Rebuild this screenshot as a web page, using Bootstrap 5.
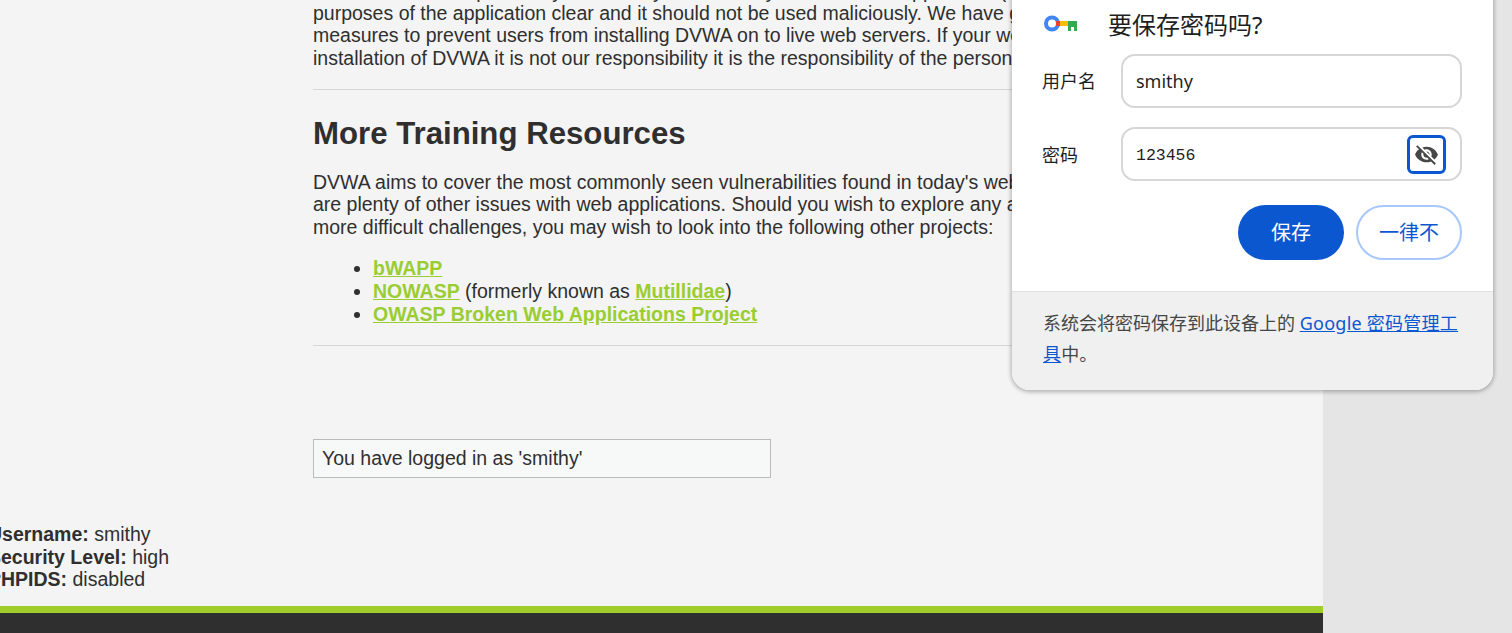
<!DOCTYPE html>
<html lang="en">
<head>
    <meta charset="UTF-8">
    <meta name="viewport" content="width=device-width, initial-scale=1.0">
    <title>DVWA</title>
    <link href="https://cdn.jsdelivr.net/npm/bootstrap@5.3.0/dist/css/bootstrap.min.css" rel="stylesheet">
    <style>
        html, body { height: 633px; overflow: hidden; }
        body { background: #e5e5e5; font-family: "Liberation Sans", Arial, sans-serif; font-size: 19.5px; line-height: 22.4px; color: #2f2f2f; }
        .dvwa-page { width: 1323px; height: 633px; background: #f4f4f4; overflow: hidden; }
        .dvwa-main { margin: -20.4px 0 0 313px; width: 1000px; white-space: nowrap; }
        .dvwa-main p { margin: 0; }
        .dvwa-main hr { margin: 20px 0 0; border: 0; border-top: 1px solid #d6d6d6; opacity: 1; }
        .dvwa-main h2 { font-size: 31.2px; line-height: 35px; font-weight: 700; margin: 26px 0 19.7px; color: #2f2f2f; }
        .dvwa-main ul { margin: 19.3px 0 0; padding-left: 60px; }
        .dvwa-main li { line-height: 22.6px; }
        .dvwa-main a { color: #9acd32; font-weight: 700; }
        .log-box { width: 458px; height: 39px; margin-top: 93px; padding: 7px 8px; border: 1px solid #bbb; background: #f7f9f8; }
        .status-block { margin: 45px 0 0 -12px; }
        .page-foot { border-top: 7px solid #a0cc2c; background: #2f2f2f; height: 60px; margin-top: 16px; }

        .pw-popup { position: absolute; top: -20px; left: 1012px; width: 481px; height: 410px; padding-top: 20px; background: #fff; border-radius: 0 0 18px 18px; box-shadow: 0 1px 4px 1px rgba(0,0,0,.28); font-family: "Noto Sans", "Noto Sans CJK SC", sans-serif; color: #1f1f1f; font-size: 18px; line-height: 24px; overflow: hidden; }
        .pw-head { height: 34px; margin: 8px 0 0 32px; }
        .pw-head svg { width: 34px; height: 17px; margin-top: -3px; }
        .pw-title { font-size: 24px; line-height: 34px; margin-left: 30px; }
        .pw-row { margin: 12px 31px 0 30px; }
        .pw-row-pw { margin-top: 19px; }
        .pw-row-pw .pw-label { padding-top: 2px; }
        .pw-label { width: 79px; flex-shrink: 0; }
        .pw-input { height: 54px; border: 2px solid #d6d6d6; border-radius: 14px; padding: 0 13px; font-size: 18px; color: #1f1f1f; box-shadow: none; }
        .pw-digits { font-family: "Liberation Mono", monospace; font-size: 16.5px; padding-top: 2px; padding-right: 52px; }
        .eye-btn { position: absolute; right: 16px; top: 8px; width: 39px; height: 39px; border: 3px solid #0b57d0; border-radius: 6px; background: #fff; }
        .eye-btn svg { width: 25px; height: 25px; }
        .pw-actions { margin: 24px 31px 0 0; gap: 12px; }
        .pw-save, .pw-never { width: 106px; height: 55px; font-size: 20px; padding: 0; }
        .pw-save { background: #0b57d0; border: 0; color: #fff; }
        .pw-never { background: #fff; border: 2px solid #a8c7fa; color: #0b57d0; }
        .pw-foot { margin-top: 31px; height: 100px; padding: 16px 30px 0 31px; background: #f0f0f0; border-top: 1px solid #e1e1e1; color: #444746; line-height: 31px; }
        .pw-foot a { color: #0b57d0; letter-spacing: .25px; }
    </style>
</head>
<body class="position-relative">
    <div class="dvwa-page">
        <div class="dvwa-main">
            <p>We do not take responsibility for the way in which any one uses this application (DVWA). We have made the<br>
            purposes of the application clear and it should not be used maliciously. We have given warnings and taken<br>
            measures to prevent users from installing DVWA on to live web servers. If your web server is compromised via an<br>
            installation of DVWA it is not our responsibility it is the responsibility of the person/s who uploaded and installed it.</p>
            <hr>
            <h2>More Training Resources</h2>
            <p>DVWA aims to cover the most commonly seen vulnerabilities found in today's web applications. However there<br>
            are plenty of other issues with web applications. Should you wish to explore any additional attack vectors, or want<br>
            more difficult challenges, you may wish to look into the following other projects:</p>
            <ul>
                <li><a href="#">bWAPP</a></li>
                <li><a href="#">NOWASP</a> (formerly known as <a href="#">Mutillidae</a>)</li>
                <li><a href="#">OWASP Broken Web Applications Project</a></li>
            </ul>
            <hr>
            <div class="log-box">You have logged in as 'smithy'</div>
        </div>
        <div class="status-block">
            <b>Username:</b> smithy<br>
            <b>Security Level:</b> high<br>
            <b>PHPIDS:</b> disabled
        </div>
        <div class="page-foot"></div>
    </div>

    <div class="pw-popup">
        <div class="pw-head d-flex align-items-center">
            <svg viewBox="0 0 34 17" aria-hidden="true">
                <circle cx="8" cy="8.5" r="6" fill="none" stroke="#4285f4" stroke-width="4"/>
                <rect x="12" y="6" width="4" height="5" fill="#ea4335"/>
                <rect x="16" y="6" width="8" height="5" fill="#fbbc04"/>
                <path d="M24 6h9v10h-3v-4h-3v4h-3z" fill="#34a853"/>
            </svg>
            <span class="pw-title">要保存密码吗?</span>
        </div>
        <div class="pw-row d-flex align-items-center">
            <label class="pw-label">用户名</label>
            <input class="form-control pw-input" type="text" value="smithy">
        </div>
        <div class="pw-row pw-row-pw d-flex align-items-center">
            <label class="pw-label">密码</label>
            <div class="position-relative flex-grow-1">
                <input class="form-control pw-input pw-digits" type="text" value="123456">
                <button class="eye-btn d-flex align-items-center justify-content-center p-0" type="button">
                    <svg viewBox="0 0 24 24" fill="#474747" aria-hidden="true"><path d="M12 7c2.76 0 5 2.24 5 5 0 .65-.13 1.26-.36 1.83l2.92 2.92c1.51-1.26 2.7-2.89 3.43-4.75-1.73-4.39-6-7.5-11-7.5-1.4 0-2.74.25-3.98.7l2.16 2.16C10.74 7.13 11.35 7 12 7zM2 4.27l2.28 2.28.46.46C3.08 8.3 1.78 10.02 1 12c1.73 4.39 6 7.5 11 7.5 1.55 0 3.03-.3 4.38-.84l.42.42L19.73 22 21 20.73 3.27 3 2 4.27zM7.53 9.8l1.55 1.55c-.05.21-.08.43-.08.65 0 1.66 1.34 3 3 3 .22 0 .44-.03.65-.08l1.55 1.55c-.67.33-1.41.53-2.2.53-2.76 0-5-2.24-5-5 0-.79.2-1.53.53-2.2zm4.31-.78l3.15 3.15.02-.16c0-1.66-1.34-3-3-3l-.17.01z"/></svg>
                </button>
            </div>
        </div>
        <div class="pw-actions d-flex justify-content-end">
            <button class="btn rounded-pill pw-save" type="button">保存</button>
            <button class="btn rounded-pill pw-never" type="button">一律不</button>
        </div>
        <div class="pw-foot">系统会将密码保存到此设备上的 <a href="#">Google 密码管理工具</a>中。</div>
    </div>

    <script src="https://cdn.jsdelivr.net/npm/bootstrap@5.3.0/dist/js/bootstrap.bundle.min.js"></script>
</body>
</html>
